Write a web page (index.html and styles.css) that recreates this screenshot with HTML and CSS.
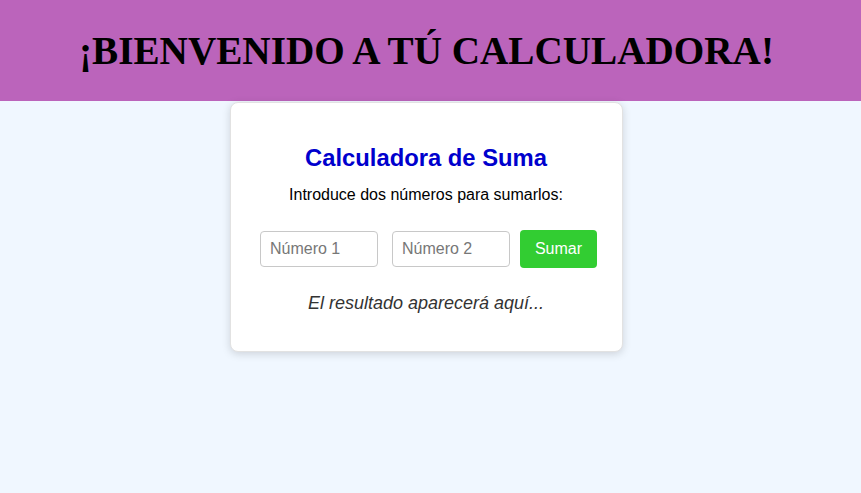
FILE: index.html
```html
<!DOCTYPE html>
<html lang="es">
<head>
<meta charset="utf-8">
<title>Calculadora</title>
<link rel="stylesheet" href="styles.css">
</head>
<body>
<header class="banner">
  <h1 class="banner-title">¡BIENVENIDO A TÚ CALCULADORA!</h1>
</header>
<main class="page">
  <section class="card">
    <h2 class="card-title">Calculadora de Suma</h2>
    <p class="card-text">Introduce dos números para sumarlos:</p>
    <div class="row">
      <input class="field" type="number" placeholder="Número 1">
      <input class="field" type="number" placeholder="Número 2">
      <button class="btn" type="button">Sumar</button>
    </div>
    <p class="result">El resultado aparecerá aquí...</p>
  </section>
</main>
</body>
</html>
```
FILE: styles.css
```css
html, body {
  margin: 0;
  padding: 0;
}
body {
  background: #f0f7ff;
  font-family: "Liberation Sans", Arial, sans-serif;
  min-height: 100vh;
}
.banner {
  background: #bb64bb;
  height: 101px;
  display: flex;
  align-items: center;
  justify-content: center;
  padding-right: 8px;
}
.banner-title {
  margin: 0;
  font-family: "Liberation Serif", "Times New Roman", serif;
  font-weight: bold;
  font-size: 39.2px;
  color: #000;
}
.page {
  display: flex;
  justify-content: center;
  padding-right: 9px;
}
.card {
  margin-top: 1px;
  width: 393px;
  box-sizing: border-box;
  background: #fff;
  border-radius: 8px;
  box-shadow: 0 2px 8px rgba(0,0,0,0.15);
  border: 1px solid #e2e2e2;
  padding: 41px 24px 37px 24px;
  text-align: center;
}
.card-title {
  margin: 0;
  font-size: 23.8px;
  font-weight: bold;
  color: #0000cd;
  line-height: 28px;
}
.card-text {
  margin: 13px 0 0;
  font-size: 16px;
  line-height: 19px;
  color: #000;
}
.row {
  margin-top: 26px;
  padding-left: 5px;
  display: flex;
  align-items: center;
  justify-content: center;
}
.field {
  flex-shrink: 0;
  width: 118px;
  height: 36px;
  box-sizing: border-box;
  border: 1px solid #c8c8c8;
  border-radius: 4px;
  padding: 0 9px;
  font-family: "Liberation Sans", Arial, sans-serif;
  font-size: 16px;
  margin-right: 14px;
  background: #fff;
}
.field + .field {
  margin-right: 10px;
}
.field::placeholder {
  color: #777;
}
.btn {
  flex-shrink: 0;
  width: 77px;
  height: 38px;
  border: none;
  border-radius: 4px;
  background: #32cd32;
  color: #fff;
  font-family: "Liberation Sans", Arial, sans-serif;
  font-size: 16px;
  padding: 0;
}
.result {
  margin: 25px 0 0;
  font-size: 18px;
  line-height: 21px;
  font-style: italic;
  color: #333;
}
```
